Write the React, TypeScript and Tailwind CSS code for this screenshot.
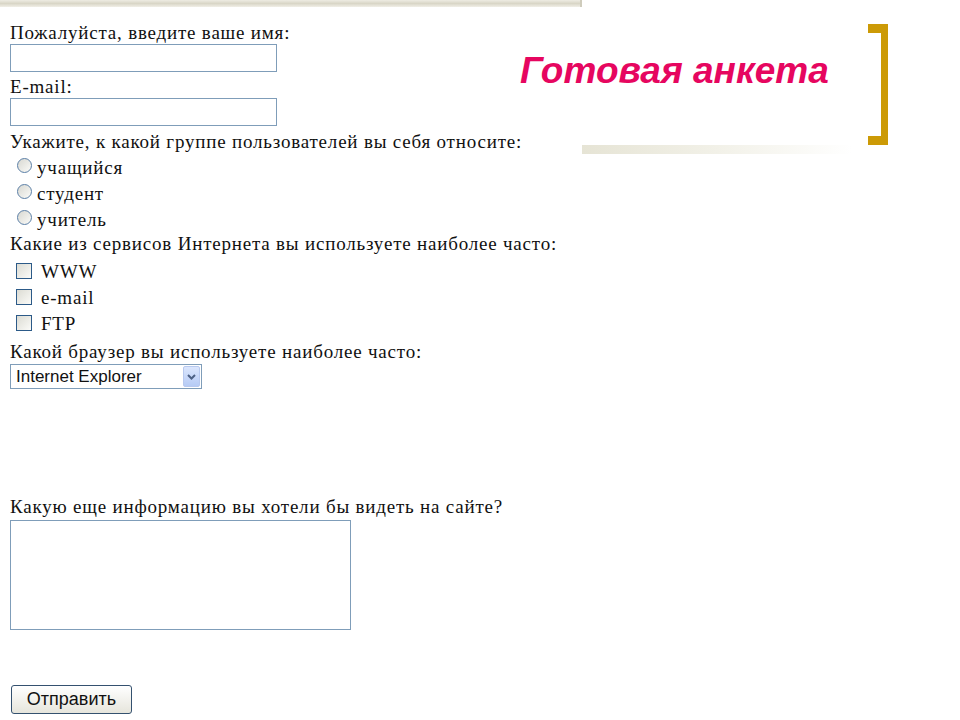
import React from 'react';

const serif = "font-['Liberation_Serif','Times_New_Roman',serif]";
const sans = "font-['Liberation_Sans',Arial,sans-serif]";

function Radio() {
  return (
    <span className="ml-[17px] mr-[5px] mb-[4px] inline-block h-[15px] w-[15px] shrink-0 rounded-full border border-[#5b7fa6] bg-gradient-to-br from-[#d8d8d2] to-[#fbfbf8]" />
  );
}

function Checkbox() {
  return (
    <span className="ml-[16px] mr-[9px] mb-[2px] inline-block h-[16px] w-[16px] shrink-0 border border-[#2c5a88] bg-gradient-to-br from-[#dcdcd4] to-[#fbfbf8]" />
  );
}

function Label({ children, className = '' }: { children: React.ReactNode; className?: string }) {
  return <div className={`h-[22px] pl-[10px] leading-[22px] whitespace-nowrap ${className}`}>{children}</div>;
}

function OptionRow({ children, box }: { children: React.ReactNode; box: React.ReactNode }) {
  return (
    <div className="flex h-[26px] items-end pb-[4px] leading-[18px] whitespace-nowrap">
      {box}
      <span>{children}</span>
    </div>
  );
}

export default function App() {
  return (
    <div className="relative h-[720px] w-[960px] overflow-hidden bg-white text-[#111]">
      <div className="w-[582px]">
        <div className="h-[7px] w-[582px] bg-gradient-to-b from-[#eeece3] via-[#d9d6c7] to-[#f1efe7] border-r-2 border-[#cfccbc]" />

        <div className={`${serif} text-[19px] tracking-[0.8px]`}>
          <Label className="mt-[15px]">Пожалуйста, введите ваше имя:</Label>
          <div className="ml-[10px] h-[28px] w-[267px] border border-[#7f9db9] bg-white" />
          <Label className="mt-[4px]">E-mail:</Label>
          <div className="ml-[10px] h-[28px] w-[267px] border border-[#7f9db9] bg-white" />
          <Label className="mt-[5px]">Укажите, к какой группе пользователей вы себя относите:</Label>

          <div className="mt-[2px]">
            <OptionRow box={<Radio />}>учащийся</OptionRow>
            <OptionRow box={<Radio />}>студент</OptionRow>
            <OptionRow box={<Radio />}>учитель</OptionRow>
          </div>

          <Label>Какие из сервисов Интернета вы используете наиболее часто:</Label>
          <div className="mt-[4px]">
            <OptionRow box={<Checkbox />}>WWW</OptionRow>
            <OptionRow box={<Checkbox />}>e-mail</OptionRow>
            <OptionRow box={<Checkbox />}>FTP</OptionRow>
          </div>

          <Label className="mt-[4px]">Какой браузер вы используете наиболее часто:</Label>
          <div className={`${sans} ml-[10px] mt-[1px] flex h-[25px] w-[192px] items-center justify-between border border-[#7f9db9] bg-white pl-[5px] pr-[1px] text-[17px] tracking-normal`}>
            <span className="leading-none">Internet Explorer</span>
            <span className="flex h-[21px] w-[17px] items-center justify-center rounded-[2px] border border-[#b8c9ef] bg-gradient-to-b from-[#dbe6fd] to-[#b6cbf5]">
              <svg width="9" height="6" viewBox="0 0 9 6">
                <path d="M1 1l3.5 3.5L8 1" fill="none" stroke="#4d6185" strokeWidth="2" />
              </svg>
            </span>
          </div>

          <Label className="mt-[107px]">Какую еще информацию вы хотели бы видеть на сайте?</Label>
          <div className="ml-[10px] mt-[2px] h-[110px] w-[341px] border border-[#7f9db9] bg-white" />

          <button
            className={`${sans} ml-[11px] mt-[55px] flex h-[29px] w-[121px] items-center justify-center rounded-[3px] border border-[#34516f] bg-gradient-to-b from-white to-[#e6e5dc] text-[18px] tracking-normal text-[#111]`}
          >
            Отправить
          </button>
        </div>
      </div>

      {/* slide title block */}
      <div className={`${sans} absolute left-[520px] top-[52px] text-[37px] font-bold italic leading-none text-[#e6065f] whitespace-nowrap`}>
        Готовая анкета
      </div>
      <div className="absolute left-[582px] top-[145px] h-[9px] w-[270px] bg-gradient-to-r from-[#e6e4d5] via-[#f2f1e8] to-white" />
      <div className="absolute left-[868px] top-[24px] flex h-[121px] w-[20px] flex-col items-end">
        <div className="h-[9px] w-[20px] bg-[#cc9a06]" />
        <div className="w-[7px] flex-1 bg-[#cc9a06]" />
        <div className="h-[9px] w-[20px] bg-[#cc9a06]" />
      </div>
    </div>
  );
}
